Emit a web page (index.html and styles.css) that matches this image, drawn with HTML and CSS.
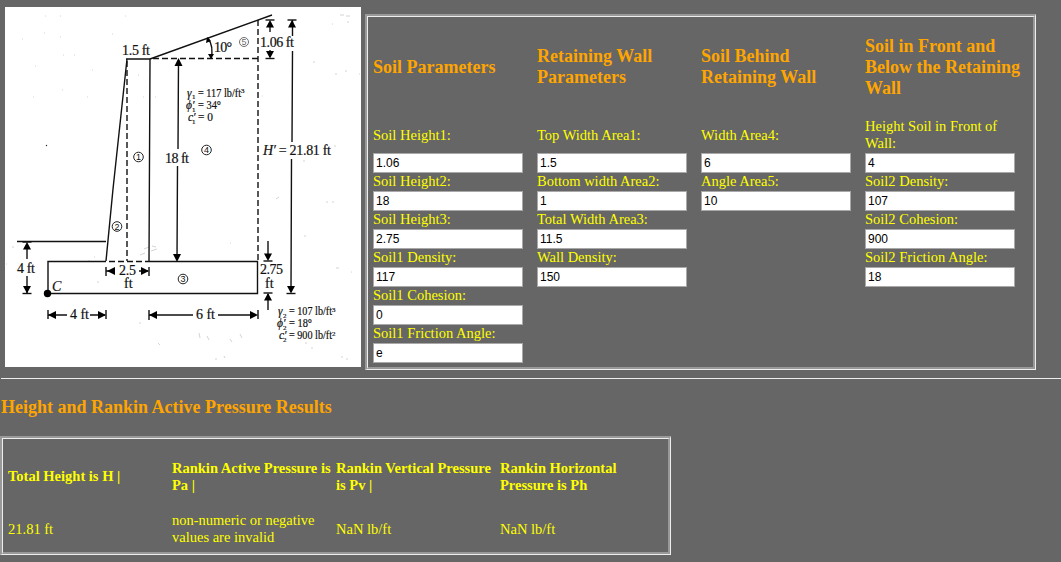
FILE: index.html
```html
<!DOCTYPE html>
<html lang="en">
<head>
<meta charset="utf-8">
<title>Retaining Wall Rankin Pressure</title>
<link rel="stylesheet" href="styles.css">
</head>
<body>
<main class="top">
<svg class="diagram" viewBox="5 7 356 360" role="img" aria-label="Retaining wall cross-section">
  <defs>
    <path id="arrow" d="M0 0L-4 8H4Z"/>
    <g id="tip-up"><path d="M0 0L-4 7.500H4Z"/><path class="line" d="M-4.500 0H4.500"/></g>
  </defs>
  <rect x="5" y="7" width="356" height="360" fill="#fff"/>
  <g class="speck">
    <path d="M45 16h1M60 16h1M125 16h1M44 33h1M60 37h1M22 39h1M112 34h1M63 55h1M74 55h1M35 66h1M92 70h1M62 90h1M33 97h1M87 97h1M143 97h1M155 97h1M138 75h1M340 15h4M346 16h4M347 22h2M332 24h1M335 74h2M345 71h2M359 74h1M313 62h2M334 146h2M303 161h2M262 96h1M12 247h2M6 264h1M88 261h2M94 257h1M97 282h2M144 249l5-2M151 251l6-2M140 255l5-2M152 246l4 1M276 199l3-2M326 202h2M332 202h2M304 236h2M336 268h3M351 272h1M230 243h1M158 343l2 2M199 333l1 5M207 336l2 4M230 339l2 3M240 334l2 4M215 359h2M224 356l1 2M341 357h2M346 359h2M305 343h2M311 348h2M139 323h2"/>
    <circle cx="46.500" cy="145.500" r=".7" fill="#222"/>
  </g>
  <g class="line">
    <path d="M126 59H150M150 59L272 15M127 59L113 189L106 261M150 59L149 262"/>
    <path d="M17 241.500H106M48 293V261.500H106M149 261.500H257.500V293.500H48"/>
    <path class="dash" d="M153 58.500H258M127 61V261M258 20V260M109 261.500H149"/>
    <path d="M178.500 60L178 149M177.500 166L177 260M292.500 20V36M292.500 51L292 142M291.500 159L291 292"/>
    <path d="M270 22V32M270 50V57M268 241V259M268 294V310M27 244V259M27 276V293"/>
    <path d="M48 315H67M90 315H105M149 315H193M218 315H256M106 271H115M139 271H148"/>
    <path d="M48 310V319M106 310V319M149 310V320M258 310V319M106 267V276M149 267V276"/>
    <path d="M208 38Q214 47 211 58"/>
  </g>
  <use href="#arrow" transform="translate(178.500 58)"/>
  <use href="#arrow" transform="translate(177 262) rotate(180)"/>
  <use href="#tip-up" transform="translate(292 20)"/>
  <use href="#tip-up" transform="translate(291 293.500) rotate(180)"/>
  <use href="#tip-up" transform="translate(270 20)"/>
  <use href="#tip-up" transform="translate(270 58.500) rotate(180)"/>
  <use href="#tip-up" transform="translate(268 261) rotate(180)"/>
  <use href="#tip-up" transform="translate(268 293)"/>
  <use href="#tip-up" transform="translate(27 242)"/>
  <use href="#tip-up" transform="translate(27 293.500) rotate(180)"/>
  <use href="#arrow" transform="translate(48 315) rotate(-90)"/>
  <use href="#arrow" transform="translate(106 315) rotate(90)"/>
  <use href="#arrow" transform="translate(149 315) rotate(-90)"/>
  <use href="#arrow" transform="translate(258 315) rotate(90)"/>
  <use href="#arrow" transform="translate(107 271) rotate(-90)"/>
  <use href="#arrow" transform="translate(149 271) rotate(90)"/>
  <path d="M207 37L206 43L211 41ZM211 59L208 54L214 54Z"/>
  <circle cx="47.500" cy="293.500" r="3.700"/>
  <g class="dim">
    <text x="122" y="55" textLength="28">1.5 ft</text>
    <text x="214" y="52" textLength="18">10°</text>
    <text x="260" y="47" textLength="34">1.06 ft</text>
    <text x="165" y="163" textLength="24">18 ft</text>
    <text x="263" y="155" textLength="68"><tspan class="var">H′</tspan> = 21.81 ft</text>
    <text x="17" y="273" textLength="18">4 ft</text>
    <text x="119" y="275" textLength="17">2.5</text>
    <text x="124" y="288">ft</text>
    <text x="260" y="274" textLength="23">2.75</text>
    <text x="265" y="288">ft</text>
    <text x="70" y="319" textLength="19">4 ft</text>
    <text x="196" y="319" textLength="19">6 ft</text>
    <text x="52" y="291" class="var">C</text>
  </g>
  <g class="prop">
    <text x="187" y="97" class="var">γ</text><text x="192" y="99" class="sub">1</text><text x="198" y="97" textLength="43" lengthAdjust="spacingAndGlyphs">= 117 lb/ft</text><text x="241" y="93" class="sub">3</text>
    <text x="186" y="109" class="var">ϕ′</text><text x="192" y="112" class="sub">1</text><text x="198" y="109" textLength="23" lengthAdjust="spacingAndGlyphs">= 34°</text>
    <text x="188" y="121" class="var">c′</text><text x="192" y="124" class="sub">1</text><text x="198" y="121" textLength="15" lengthAdjust="spacingAndGlyphs">= 0</text>
    <text x="278" y="315" class="var">γ</text><text x="283" y="318" class="sub">2</text><text x="289" y="315" textLength="43" lengthAdjust="spacingAndGlyphs">= 107 lb/ft</text><text x="332" y="312" class="sub">3</text>
    <text x="277" y="327" class="var">ϕ′</text><text x="283" y="330" class="sub">2</text><text x="289" y="327" textLength="23" lengthAdjust="spacingAndGlyphs">= 18°</text>
    <text x="279" y="339" class="var">c′</text><text x="283" y="342" class="sub">2</text><text x="289" y="339" textLength="43" lengthAdjust="spacingAndGlyphs">= 900 lb/ft</text><text x="332" y="336" class="sub">2</text>
  </g>
  <g class="area">
    <circle cx="138.500" cy="157" r="4.800"/><text x="138.500" y="160">1</text>
    <circle cx="117" cy="226.500" r="4.800"/><text x="117" y="229.500">2</text>
    <circle cx="183" cy="279" r="4.800"/><text x="183" y="282">3</text>
    <circle cx="206.500" cy="150" r="4.800"/><text x="206.500" y="153">4</text>
    <g class="faint"><circle cx="244" cy="42" r="4.500"/><text x="244" y="45">5</text></g>
  </g>
</svg>
<form class="panel params">
  <section class="col">
    <h3 class="heading">Soil Parameters</h3>
    <label class="field first"><span>Soil Height1:</span><input value="1.06"></label>
    <label class="field"><span>Soil Height2:</span><input value="18"></label>
    <label class="field"><span>Soil Height3:</span><input value="2.75"></label>
    <label class="field"><span>Soil1 Density:</span><input value="117"></label>
    <label class="field"><span>Soil1 Cohesion:</span><input value="0"></label>
    <label class="field"><span>Soil1 Friction Angle:</span><input value="e"></label>
  </section>
  <section class="col">
    <h3 class="heading">Retaining Wall<br>Parameters</h3>
    <label class="field first"><span>Top Width Area1:</span><input value="1.5"></label>
    <label class="field"><span>Bottom width Area2:</span><input value="1"></label>
    <label class="field"><span>Total Width Area3:</span><input value="11.5"></label>
    <label class="field"><span>Wall Density:</span><input value="150"></label>
  </section>
  <section class="col">
    <h3 class="heading">Soil Behind<br>Retaining Wall</h3>
    <label class="field first"><span>Width Area4:</span><input value="6"></label>
    <label class="field"><span>Angle Area5:</span><input value="10"></label>
  </section>
  <section class="col">
    <h3 class="heading">Soil in Front and<br>Below the Retaining<br>Wall</h3>
    <label class="field first"><span>Height Soil in Front of<br>Wall:</span><input value="4"></label>
    <label class="field"><span>Soil2 Density:</span><input value="107"></label>
    <label class="field"><span>Soil2 Cohesion:</span><input value="900"></label>
    <label class="field"><span>Soil2 Friction Angle:</span><input value="18"></label>
  </section>
</form>
</main>
<hr class="rule">
<h3 class="results-title">Height and Rankin Active Pressure Results</h3>
<section class="panel results">
  <h4>Total Height is H |</h4>
  <h4>Rankin Active Pressure is<br>Pa |</h4>
  <h4>Rankin Vertical Pressure<br>is Pv |</h4>
  <h4>Rankin Horizontal<br>Pressure is Ph</h4>
  <p>21.81 ft</p>
  <p>non-numeric or negative<br>values are invalid</p>
  <p>NaN lb/ft</p>
  <p>NaN lb/ft</p>
</section>
</body>
</html>
```
FILE: styles.css
```css
* { box-sizing: border-box; }
body {
  margin: 0;
  height: 562px;
  overflow: hidden;
  background: #666;
  color: #ff0;
  font: 14.5px/17px "Liberation Serif", "Times New Roman", serif;
}
h3, h4, p { margin: 0; white-space: nowrap; }
h3 { color: orange; font-size: 18px; line-height: 21px; }
h4 { font-size: 14.5px; }

.top { display: flex; align-items: flex-start; height: 378px; padding: 7px 0 0 5px; }
.diagram { flex: none; display: block; width: 356px; height: 360px; }

/* Etched frame: grey outside and light inside at top-left, reversed at bottom-right */
.panel {
  position: relative;
  width: 671px;
  border: 1px solid #eee;
  border-top: 2px solid #999;
  border-left: 2px solid #999;
}
.panel::before {
  content: "";
  position: absolute;
  inset: 0;
  pointer-events: none;
  border: 2px solid #999;
  border-top: 1px solid #eee;
  border-left: 1px solid #eee;
}

.params { flex: none; display: grid; grid-template-columns: repeat(4, 164px); height: 356px; margin: 7px 0 0 4px; padding: 1px 0 0 6px; }
.col { display: flex; flex-direction: column; }
.heading { display: flex; align-items: center; height: 101px; padding-bottom: 1px; }
.field { display: flex; flex-direction: column; height: 38px; white-space: nowrap; }
.field span { height: 18px; }
.first { height: 55px; }
.first span { display: flex; align-items: center; height: 35px; padding-bottom: 1px; }
.field input {
  width: 150px;
  height: 20px;
  padding: 1px 2px;
  border: 1px solid #a9a9a9;
  border-radius: 0;
  background: #fff;
  color: #000;
  font: 12px "Liberation Sans", Arial, sans-serif;
}

.rule { height: 1px; margin: 0 0 0 1px; border: 0; background: #eee; }
.results-title { padding: 18px 0 0 1px; height: 57px; }
.results { display: grid; grid-template-columns: repeat(4, 164px); grid-template-rows: 75px 30px; align-items: center; height: 119px; padding: 1px 0 0 6px; }

.line { fill: none; stroke: #111; stroke-width: 1.4; }
.dash { stroke-dasharray: 6 3; }
.speck path { stroke: #d4d4d4; stroke-width: 1; fill: none; }
.dim { font-size: 14px; fill: #111; stroke: #111; stroke-width: .2; }
.prop { font-size: 11.5px; fill: #111; stroke: #111; stroke-width: .2; }
.sub { font-size: 7px; }
.var { font-style: italic; }
.area { font: 9px "Liberation Sans", Arial, sans-serif; text-anchor: middle; fill: #111; }
.area circle { fill: none; stroke: #222; }
.faint { opacity: .65; }
```
